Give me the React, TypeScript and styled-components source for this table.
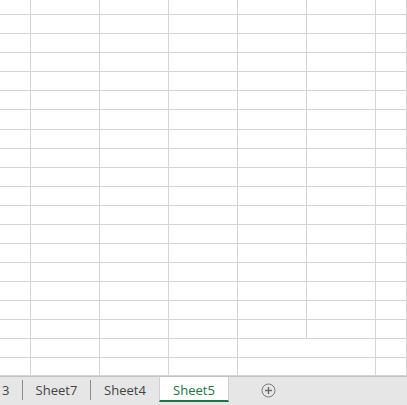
import React from "react";
import styled, { createGlobalStyle } from "styled-components";

const GlobalStyle = createGlobalStyle`
  html, body {
    margin: 0;
    padding: 0;
    background: #ffffff;
    overflow: hidden;
  }
  body {
    font-family: "Open Sans", "Noto Sans", Arial, sans-serif;
  }
`;

const Workbook = styled.div`
  width: 407px;
  height: 405px;
  display: flex;
  flex-direction: column;
  overflow: hidden;
`;

const SheetArea = styled.div`
  height: 376px;
  box-sizing: border-box;
  border-bottom: 1px solid #d4d4d4;
  overflow: hidden;
  display: flex;
  flex-direction: column;
`;

const Row = styled.div<{ $h: number }>`
  display: flex;
  flex: 0 0 ${(p) => p.$h}px;
  height: ${(p) => p.$h}px;
  box-sizing: border-box;
  border-bottom: 1px solid #d4d4d4;
`;

const Cell = styled.div<{ $w?: number; $open?: boolean }>`
  box-sizing: border-box;
  height: 100%;
  flex: ${(p) => (p.$w ? `0 0 ${p.$w}px` : "1 1 auto")};
  border-right: 1px solid ${(p) => (p.$open ? "transparent" : "#d4d4d4")};
`;

const TabBar = styled.div`
  flex: 1;
  display: flex;
  align-items: flex-start;
  background: #e6e6e6;
  border-top: 1px solid #c3c3c3;
  font-size: 13px;
  color: #444444;
`;

const Tab = styled.div<{ $w: number; $active?: boolean; $first?: boolean }>`
  flex: 0 0 ${(p) => p.$w}px;
  width: ${(p) => p.$w}px;
  height: 25px;
  box-sizing: border-box;
  display: flex;
  align-items: center;
  justify-content: ${(p) => (p.$first ? "flex-start" : "center")};
  padding: 3px 0 0 ${(p) => (p.$first ? 1 : 0)}px;
  white-space: nowrap;
  overflow: hidden;
  background: ${(p) => (p.$active ? "#ffffff" : "transparent")};
  color: ${(p) => (p.$active ? "#217346" : "#444444")};
  border-left: 1px solid ${(p) => (p.$active ? "#d0d0d0" : "transparent")};
  border-right: 1px solid ${(p) => (p.$active ? "#d0d0d0" : "transparent")};
  border-bottom: 2px solid ${(p) => (p.$active ? "#217346" : "transparent")};
`;

const Divider = styled.div`
  flex: 0 0 1px;
  height: 20px;
  margin-top: 3px;
  background: #8c8c8c;
`;

const AddButton = styled.div`
  margin-left: 32px;
  margin-top: 6px;
  width: 15px;
  height: 15px;
  display: flex;
`;

const columns = [31, 69, 69, 69, 69, 69];

const rowHeights = (() => {
  const list = [15];
  for (let i = 1; i <= 20; i++) list.push(i === 6 ? 20 : 19);
  return list;
})();

export default function App() {
  return (
    <Workbook>
      <GlobalStyle />
      <SheetArea>
        {rowHeights.map((h, r) => (
          <Row key={r} $h={h}>
            {columns.map((w, c) => (
              <Cell key={c} $w={w} $open={c === 4 && r >= 18} />
            ))}
            <Cell />
          </Row>
        ))}
      </SheetArea>
      <TabBar>
        <Tab $w={22} $first>
          3
        </Tab>
        <Divider />
        <Tab $w={67}>Sheet7</Tab>
        <Divider />
        <Tab $w={68}>Sheet4</Tab>
        <Tab $w={70} $active>
          Sheet5
        </Tab>
        <AddButton>
          <svg width="15" height="15" viewBox="0 0 15 15">
            <circle cx="7.5" cy="7.5" r="6.5" fill="none" stroke="#7a7a7a" strokeWidth="1" />
            <line x1="7.5" y1="4" x2="7.5" y2="11" stroke="#6a6a6a" strokeWidth="1.4" />
            <line x1="4" y1="7.5" x2="11" y2="7.5" stroke="#6a6a6a" strokeWidth="1.4" />
          </svg>
        </AddButton>
      </TabBar>
    </Workbook>
  );
}
